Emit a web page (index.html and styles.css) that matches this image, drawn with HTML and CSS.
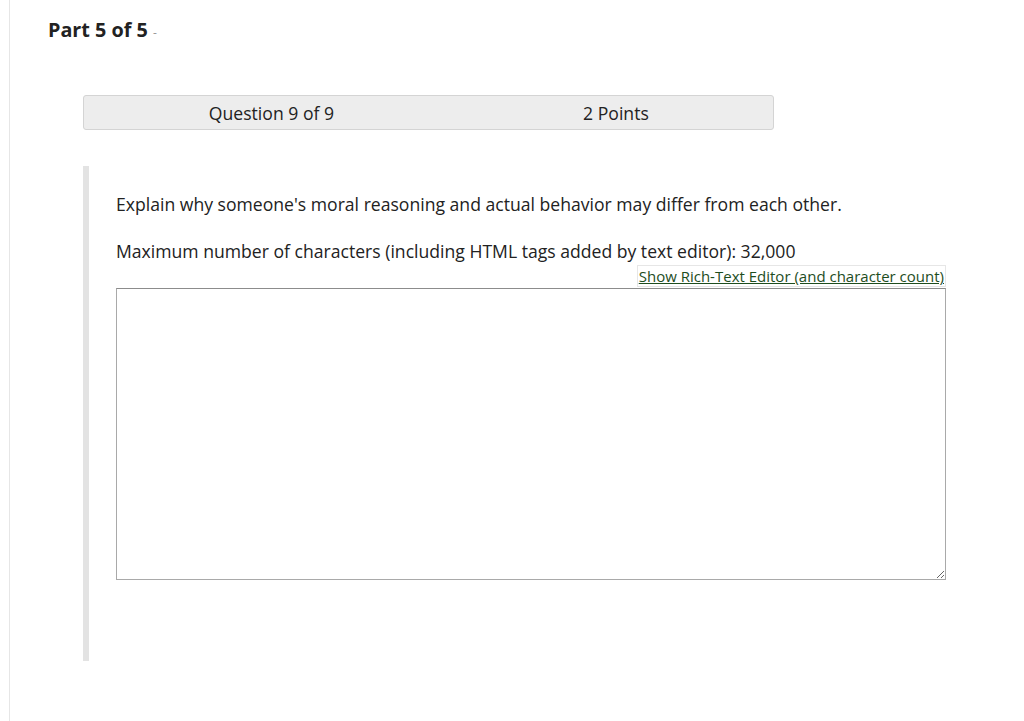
FILE: index.html
```html
<!DOCTYPE html>
<html lang="en">
<head>
  <meta charset="UTF-8" />
  <title>Part 5 of 5</title>
  <link rel="stylesheet" href="styles.css">
</head>
<body>
  <div class="page">
    <h2 class="part-title">Part 5 of 5 <span class="part-dash">-</span></h2>

    <div class="question-bar">
      <div class="qcell qnum">Question 9 of 9</div>
      <div class="qcell qpoints">2 Points</div>
    </div>

    <div class="question-body">
      <p class="question-text">Explain why someone's moral reasoning and actual behavior may differ from each other.</p>
      <p class="max-chars">Maximum number of characters (including HTML tags added by text editor): 32,000</p>
      <div class="editor-toggle">
        <a href="#" class="rte-link">Show Rich-Text Editor (and character count)</a>
      </div>
      <textarea class="answer"></textarea>
    </div>
  </div>
</body>
</html>
```

FILE: styles.css
```css
html, body {
  margin: 0;
  padding: 0;
  background: #fff;
  font-family: 'Open Sans', 'Liberation Sans', sans-serif;
  color: #222;
}

.page {
  margin-left: 9px;
  border-left: 1px solid #e6e6e6;
  min-height: 721px;
  padding: 18px 0 0 38px;
  box-sizing: border-box;
}

.part-title {
  margin: 0;
  font-size: 19.8px;
  font-weight: bold;
  line-height: 24px;
  color: #222;
}

.part-dash {
  font-size: 12px;
  font-weight: normal;
  color: #999;
}

.question-bar {
  display: flex;
  margin: 50px 0 0 35px;
  width: 691px;
  height: 35px;
  box-sizing: border-box;
  background: #ededed;
  border: 1px solid #d4d4d4;
  border-radius: 3px;
  font-size: 17.6px;
  color: #222;
}

.qcell {
  display: flex;
  align-items: center;
  justify-content: center;
}

.qnum {
  width: 376px;
}

.qpoints {
  width: 315px;
}

.question-body {
  margin: 36px 0 0 35px;
  border-left: 6px solid #e3e3e3;
  padding: 25px 0 81px 27px;
  width: 830px;
}

.question-text {
  margin: 0;
  font-size: 17.6px;
  line-height: 26px;
}

.max-chars {
  margin: 21px 0 0;
  font-size: 17.6px;
  line-height: 26px;
}

.editor-toggle {
  text-align: right;
  line-height: 20px;
  height: 22px;
  padding-top: 2px;
}

.rte-link {
  font-size: 15px;
  color: #1e4d1e;
  text-decoration: underline;
  border: 1px solid #e6e6e6;
  padding: 0 1px;
}

.answer {
  display: block;
  width: 830px;
  height: 292px;
  box-sizing: border-box;
  border: 1px solid #a9a9a9;
  border-top-color: #8c8c8c;
  margin: 0;
  resize: both;
  font-family: inherit;
}
```
